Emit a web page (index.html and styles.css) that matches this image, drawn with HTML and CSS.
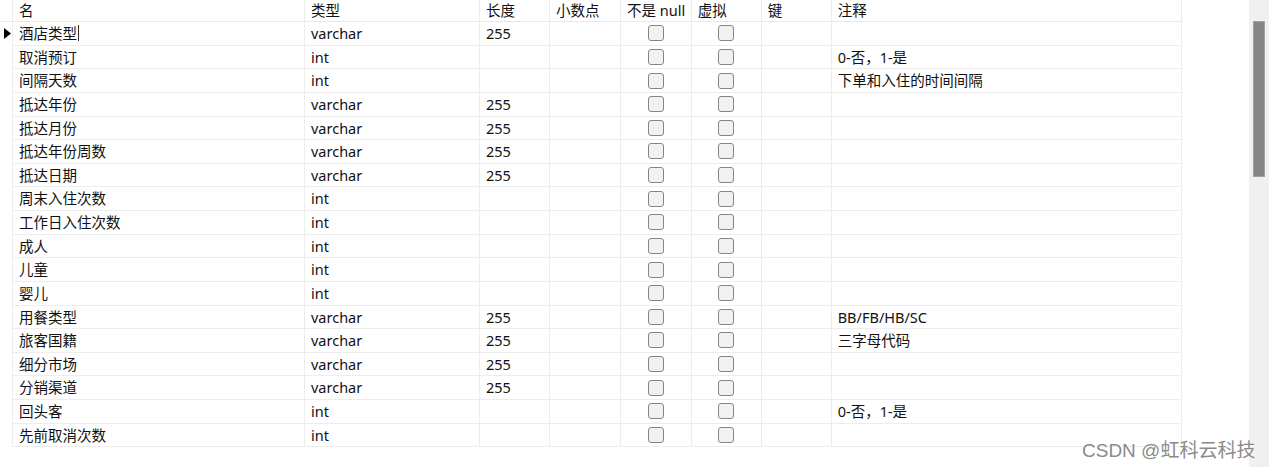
FILE: index.html
```html
<!DOCTYPE html>
<html>
<head>
<meta charset="utf-8">
<link rel="stylesheet" href="styles.css">
</head>
<body>
<div class="app">
  <div class="grid">
    <div class="row head">
      <div class="c g"></div>
      <div class="c">名</div>
      <div class="c">类型</div>
      <div class="c">长度</div>
      <div class="c">小数点</div>
      <div class="c">不是 null</div>
      <div class="c">虚拟</div>
      <div class="c">键</div>
      <div class="c">注释</div>
    </div>
    <div class="row"><div class="c g"><svg class="arrow" width="7" height="11" viewBox="0 0 7 11"><path d="M0 0 L7 5.5 L0 11 Z" fill="#000"/></svg></div><div class="c">酒店类型<span class="caret"></span></div><div class="c">varchar</div><div class="c">255</div><div class="c"></div><div class="c cb"><span class="box"></span></div><div class="c cb"><span class="box"></span></div><div class="c"></div><div class="c"></div></div>
    <div class="row"><div class="c g"></div><div class="c">取消预订</div><div class="c">int</div><div class="c"></div><div class="c"></div><div class="c cb"><span class="box"></span></div><div class="c cb"><span class="box"></span></div><div class="c"></div><div class="c">0-否，1-是</div></div>
    <div class="row"><div class="c g"></div><div class="c">间隔天数</div><div class="c">int</div><div class="c"></div><div class="c"></div><div class="c cb"><span class="box"></span></div><div class="c cb"><span class="box"></span></div><div class="c"></div><div class="c">下单和入住的时间间隔</div></div>
    <div class="row"><div class="c g"></div><div class="c">抵达年份</div><div class="c">varchar</div><div class="c">255</div><div class="c"></div><div class="c cb"><span class="box"></span></div><div class="c cb"><span class="box"></span></div><div class="c"></div><div class="c"></div></div>
    <div class="row"><div class="c g"></div><div class="c">抵达月份</div><div class="c">varchar</div><div class="c">255</div><div class="c"></div><div class="c cb"><span class="box"></span></div><div class="c cb"><span class="box"></span></div><div class="c"></div><div class="c"></div></div>
    <div class="row"><div class="c g"></div><div class="c">抵达年份周数</div><div class="c">varchar</div><div class="c">255</div><div class="c"></div><div class="c cb"><span class="box"></span></div><div class="c cb"><span class="box"></span></div><div class="c"></div><div class="c"></div></div>
    <div class="row"><div class="c g"></div><div class="c">抵达日期</div><div class="c">varchar</div><div class="c">255</div><div class="c"></div><div class="c cb"><span class="box"></span></div><div class="c cb"><span class="box"></span></div><div class="c"></div><div class="c"></div></div>
    <div class="row"><div class="c g"></div><div class="c">周末入住次数</div><div class="c">int</div><div class="c"></div><div class="c"></div><div class="c cb"><span class="box"></span></div><div class="c cb"><span class="box"></span></div><div class="c"></div><div class="c"></div></div>
    <div class="row"><div class="c g"></div><div class="c">工作日入住次数</div><div class="c">int</div><div class="c"></div><div class="c"></div><div class="c cb"><span class="box"></span></div><div class="c cb"><span class="box"></span></div><div class="c"></div><div class="c"></div></div>
    <div class="row"><div class="c g"></div><div class="c">成人</div><div class="c">int</div><div class="c"></div><div class="c"></div><div class="c cb"><span class="box"></span></div><div class="c cb"><span class="box"></span></div><div class="c"></div><div class="c"></div></div>
    <div class="row"><div class="c g"></div><div class="c">儿童</div><div class="c">int</div><div class="c"></div><div class="c"></div><div class="c cb"><span class="box"></span></div><div class="c cb"><span class="box"></span></div><div class="c"></div><div class="c"></div></div>
    <div class="row"><div class="c g"></div><div class="c">婴儿</div><div class="c">int</div><div class="c"></div><div class="c"></div><div class="c cb"><span class="box"></span></div><div class="c cb"><span class="box"></span></div><div class="c"></div><div class="c"></div></div>
    <div class="row"><div class="c g"></div><div class="c">用餐类型</div><div class="c">varchar</div><div class="c">255</div><div class="c"></div><div class="c cb"><span class="box"></span></div><div class="c cb"><span class="box"></span></div><div class="c"></div><div class="c">BB/FB/HB/SC</div></div>
    <div class="row"><div class="c g"></div><div class="c">旅客国籍</div><div class="c">varchar</div><div class="c">255</div><div class="c"></div><div class="c cb"><span class="box"></span></div><div class="c cb"><span class="box"></span></div><div class="c"></div><div class="c">三字母代码</div></div>
    <div class="row"><div class="c g"></div><div class="c">细分市场</div><div class="c">varchar</div><div class="c">255</div><div class="c"></div><div class="c cb"><span class="box"></span></div><div class="c cb"><span class="box"></span></div><div class="c"></div><div class="c"></div></div>
    <div class="row"><div class="c g"></div><div class="c">分销渠道</div><div class="c">varchar</div><div class="c">255</div><div class="c"></div><div class="c cb"><span class="box"></span></div><div class="c cb"><span class="box"></span></div><div class="c"></div><div class="c"></div></div>
    <div class="row"><div class="c g"></div><div class="c">回头客</div><div class="c">int</div><div class="c"></div><div class="c"></div><div class="c cb"><span class="box"></span></div><div class="c cb"><span class="box"></span></div><div class="c"></div><div class="c">0-否，1-是</div></div>
    <div class="row"><div class="c g"></div><div class="c">先前取消次数</div><div class="c">int</div><div class="c"></div><div class="c"></div><div class="c cb"><span class="box"></span></div><div class="c cb"><span class="box"></span></div><div class="c"></div><div class="c"></div></div>
  </div>
  <div class="scroll"><div class="thumb"></div></div>
  <div class="watermark">CSDN @虹科云科技</div>
</div>
</body>
</html>
```
FILE: styles.css
```css
* { box-sizing: border-box; }
html, body { margin: 0; padding: 0; background: #fff; }
body {
  font-family: "Noto Sans", "Noto Sans CJK SC", sans-serif;
  font-size: 14.5px;
  color: #111;
}
.app {
  position: relative;
  display: flex;
  width: 1269px;
  height: 467px;
  overflow: hidden;
}
.grid {
  width: 1249px;
  flex: none;
}
.row {
  display: grid;
  grid-template-columns: 13px 292px 175px 70px 71px 70.7px 70px 70px 350px;
  height: 23.63px;
}
.row.head {
  height: 22px;
  border-bottom: 1px solid #e8e8e8;
  width: 1181.7px;
}
.c {
  border-right: 1px solid #ededed;
  border-bottom: 1px solid #ededed;
  padding-left: 6px;
  display: flex;
  align-items: center;
  white-space: nowrap;
  line-height: 1;
}
.head .c { border-bottom: none; padding-bottom: 1px; }
.c.g { padding-left: 4px; border-bottom: none; }
.c.cb { justify-content: center; padding-left: 0; }
.box {
  width: 16px;
  height: 16px;
  border: 1px solid #858585;
  border-radius: 3px;
  background: #f1f1f1;
}
.caret {
  display: inline-block;
  width: 1px;
  height: 16px;
  background: #333;
  margin-left: 1px;
}
.scroll {
  width: 20px;
  height: 467px;
  background: #f0f0f0;
  padding: 21px 4px 0 4px;
}
.thumb {
  width: 12px;
  height: 156px;
  background: #868686;
  border: 1px solid #a0a0a0;
}
.watermark {
  position: absolute;
  left: 1082px;
  top: 435px;
  font-family: "Liberation Sans", "Noto Sans CJK SC", sans-serif;
  font-size: 19px;
  color: #8a8a8a;
  text-shadow: 0 0 1px #fff, 0 0 1px #fff;
  white-space: nowrap;
}
```
